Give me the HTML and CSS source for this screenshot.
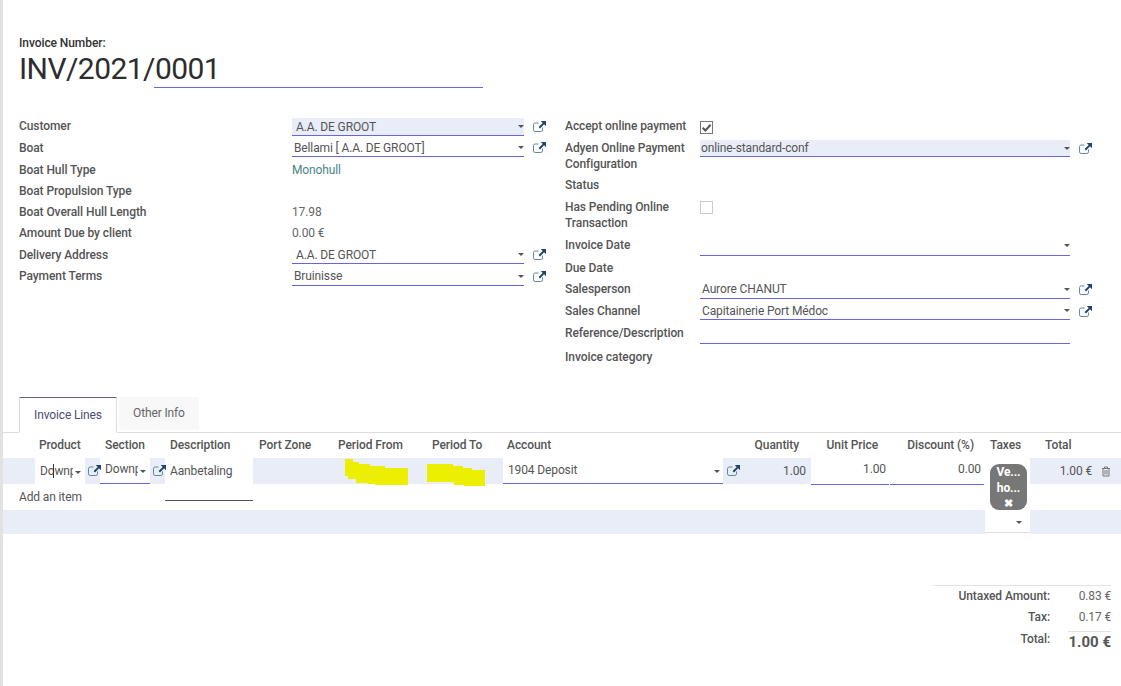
FILE: index.html
```html
<!DOCTYPE html>
<html lang="en">
<head>
<meta charset="utf-8">
<title>Invoice</title>
<link rel="stylesheet" href="styles.css">
</head>
<body>
<svg class="defs" width="0" height="0" aria-hidden="true"><defs>
<symbol id="ext" viewBox="0 0 13 11"><path d="M9.500 6.500v2.300a1.700 1.700 0 0 1-1.700 1.700H2.200A1.700 1.700 0 0 1 .5 8.800V3.700A1.700 1.700 0 0 1 2.200 2h3.300" fill="none" stroke="#5f87a0" stroke-width="1"/><path d="M7.800 0H13V5.200L11.100 3.300 7 7.400 5.600 6 9.700 1.900Z" fill="#1f4470"/></symbol>
</defs></svg>
<main class="sheet">
  <header class="title">
    <div class="title-label">Invoice Number:</div>
    <div class="title-row"><h1>INV/2021/0001</h1><span class="title-line"></span></div>
  </header>

  <section class="groups">
    <div class="group left">
      <div class="row h22"><label>Customer</label><div class="field filled pad nudge f17"><span>A.A. DE GROOT</span><i class="caret"></i></div><svg class="ext"><use href="#ext"/></svg></div>
      <div class="row h22"><label>Boat</label><div class="field f17"><span>Bellami [ A.A. DE GROOT]</span><i class="caret"></i></div><svg class="ext up"><use href="#ext"/></svg></div>
      <div class="row h21"><label>Boat Hull Type</label><div class="value teal">Monohull</div></div>
      <div class="row h21"><label>Boat Propulsion Type</label></div>
      <div class="row h21"><label>Boat Overall Hull Length</label><div class="value">17.98</div></div>
      <div class="row h22"><label>Amount Due by client</label><div class="value">0.00 €</div></div>
      <div class="row h21"><label>Delivery Address</label><div class="field pad f17"><span>A.A. DE GROOT</span><i class="caret"></i></div><svg class="ext up"><use href="#ext"/></svg></div>
      <div class="row h21"><label>Payment Terms</label><div class="field nudge lift f17"><span>Bruinisse</span><i class="caret"></i></div><svg class="ext"><use href="#ext"/></svg></div>
    </div>
    <div class="group right">
      <div class="row h22"><label>Accept online payment</label><span class="check on"><svg viewBox="0 0 10 10"><path d="M1.500 5.200 4 7.700 8.700 2.500" fill="none" stroke="currentColor" stroke-width="1.800"/></svg></span></div>
      <div class="row h37"><label>Adyen Online Payment Configuration</label><div class="field filled nudge f16"><span>online-standard-conf</span><i class="caret"></i></div><svg class="ext"><use href="#ext"/></svg></div>
      <div class="row h22"><label>Status</label></div>
      <div class="row h38"><label>Has Pending Online Transaction</label><span class="check"></span></div>
      <div class="row h23"><label>Invoice Date</label><div class="field f19"><span></span><i class="caret"></i></div></div>
      <div class="row h21"><label>Due Date</label></div>
      <div class="row h22"><label>Salesperson</label><div class="field f18"><span>Aurore CHANUT</span><i class="caret"></i></div><svg class="ext"><use href="#ext"/></svg></div>
      <div class="row h22"><label>Sales Channel</label><div class="field f17"><span>Capitainerie Port Médoc</span><i class="caret"></i></div><svg class="ext"><use href="#ext"/></svg></div>
      <div class="row h24"><label>Reference/Description</label><div class="field f19"><span></span></div></div>
      <div class="row h22"><label>Invoice category</label></div>
    </div>
  </section>

  <nav class="tabs">
    <a class="tab active">Invoice Lines</a>
    <a class="tab">Other Info</a>
  </nav>

  <section class="lines">
    <div class="th c-product">Product</div>
    <div class="th c-section">Section</div>
    <div class="th c-desc">Description</div>
    <div class="th c-port">Port Zone</div>
    <div class="th c-from">Period From</div>
    <div class="th c-to">Period To</div>
    <div class="th c-account">Account</div>
    <div class="th num c-qty">Quantity</div>
    <div class="th num c-price">Unit Price</div>
    <div class="th num c-disc">Discount (%)</div>
    <div class="th c-tax">Taxes</div>
    <div class="th c-total">Total</div>

    <div class="cell tint c-gut"></div>
    <div class="cell input-cell c-product"><span class="clip">Down<span class="cursor"></span>payment</span><i class="caret"></i></div>
    <div class="cell tint icon-cell c-pi"><svg class="ext"><use href="#ext"/></svg></div>
    <div class="cell input-cell under c-section"><span class="clip high">Downpayment</span><i class="caret"></i></div>
    <div class="cell tint icon-cell c-si"><svg class="ext"><use href="#ext"/></svg></div>
    <div class="cell desc-cell"><span class="desc-text">Aanbetaling</span></div>
    <div class="cell tint c-port"></div>
    <div class="cell tint c-from"><svg class="mark mark-from" viewBox="0 0 63 26"><path d="M0 0H8V3H14V5H25V7H40V9H63V26H30V25H22V24H11V20H3V17H0Z" fill="#ecf000"/></svg></div>
    <div class="cell tint c-to"><svg class="mark mark-to" viewBox="0 0 58 22"><path d="M0 0H26V2H36V4H45V6H58V22H37V21H27V18H0Z" fill="#ecf000"/></svg></div>
    <div class="cell input-cell under account c-account"><span class="clip">1904 Deposit</span><i class="caret"></i></div>
    <div class="cell tint icon-cell c-ai"><svg class="ext"><use href="#ext"/></svg></div>
    <div class="cell tint numval c-qty">1.00</div>
    <div class="cell under numval white c-price">1.00</div>
    <div class="cell under numval white c-disc">0.00</div>
    <div class="cell tax-cell">
      <div class="tag"><span>Ve...</span><span>ho...</span><span class="x">✖</span></div>
      <i class="caret"></i>
    </div>
    <div class="cell tint total-cell c-total"><span>1.00 €</span><svg class="trash" viewBox="0 0 10 11"><path d="M1 2.500H9M3.500 2.500V1H6.500V2.500M2 2.500V10H8V2.500M4 4V8.500M6 4V8.500" fill="none" stroke="currentColor"/></svg></div>

    <div class="add">Add an item</div>
    <div class="band band-a"></div>
    <div class="band band-b"></div>
  </section>

  <section class="totals">
    <div class="tot-row"><span class="tot-label">Untaxed Amount:</span><span class="tot-val">0.83 €</span></div>
    <div class="tot-row"><span class="tot-label">Tax:</span><span class="tot-val">0.17 €</span></div>
    <div class="tot-row grand"><span class="tot-label">Total:</span><span class="tot-val">1.00 €</span></div>
  </section>
</main>
</body>
</html>
```
FILE: styles.css
```css
html, body { margin: 0; padding: 0; height: 100%; overflow: hidden; background: #fff; }
body { font-family: Roboto, "Liberation Sans", sans-serif; font-size: 12px; line-height: 16px; color: #4c4c4c; letter-spacing: -0.13px; }
.defs { display: block; height: 0; }
.sheet { height: 686px; border-left: 3px solid #e2e2e2; box-sizing: border-box; }

.title { padding: 35px 0 0 16px; height: 97px; box-sizing: border-box; }
.title-label { font-weight: 500; color: #333; letter-spacing: -0.08px; }
.title-row { display: flex; height: 37px; align-items: flex-start; }
h1 { margin: 0; font-size: 30px; line-height: 36px; font-weight: 400; color: #2d2d2d; width: 135px; white-space: nowrap; letter-spacing: -0.55px; }
.title-line { display: block; width: 329px; height: 36px; border-bottom: 1px solid #6666e0; }

.groups { display: flex; padding: 20px 0 0 16px; height: 300px; box-sizing: border-box; }
.group { display: flex; flex-direction: column; }
.left { width: 546px; }
.row { display: flex; align-items: flex-start; flex: none; }
.row label { font-weight: 500; color: #555; flex: none; padding-top: 1px; letter-spacing: -0.08px; }
.left label { width: 273px; }
.right label { width: 135px; }
.h21 { height: 21px; }
.h22 { height: 22px; }
.h23 { height: 23px; }
.h24 { height: 24px; }
.h37 { height: 37px; }
.h38 { height: 38px; }
.field { display: flex; align-items: center; border-bottom: 1px solid #6666e0; flex: none; }
.f16 { height: 16px; }
.f17 { height: 17px; }
.f18 { height: 18px; }
.f19 { height: 19px; }
.nudge { margin-top: 1px; }
.lift span { margin-top: -2px; }
.left .field { width: 232px; }
.right .field { width: 370px; }
.field span { flex: 1; padding: 0 2px; white-space: nowrap; color: #555; }
.field.pad span { padding-left: 4px; }
.filled { background: #e9edf8; }
.right .filled span { padding-left: 1px; }
.value { padding-top: 1px; color: #666; }
.teal { color: #4a8585; }
.caret { flex: none; width: 0; height: 0; border-top: 3.500px solid #555; border-left: 3.500px solid transparent; border-right: 3.500px solid transparent; }
.ext { width: 13px; height: 11px; flex: none; margin: 4px 0 0 9px; display: block; }
.ext.up { margin-top: 3px; }
.check { width: 11px; height: 11px; border: 1px solid #ccc; margin-top: 3px; color: #555; display: block; flex: none; }
.check.on { border-color: #777; margin-top: 4px; }
.check svg { display: block; width: 11px; height: 11px; }

.tabs { display: flex; gap: 2px; padding-left: 16px; height: 36px; box-sizing: border-box; }
.tab { display: block; box-sizing: border-box; height: 33px; line-height: 33px; padding: 0 14px; background: #f8f8f8; color: #666; white-space: nowrap; width: 80px; }
.tab.active { height: 36px; background: #fff; border: 1px solid #ddd; border-top-color: #7b5f7a; border-bottom-color: #fff; color: #4c4c73; line-height: 35px; width: 98px; }
.lines { display: grid; border-top: 1px solid #ddd; margin-top: -1px;
  grid-template-columns: 32px 50px 15px 50px 15px 88px 81px 94px 75px 220px 19px 69px 78px 96px 45px 91px;
  grid-template-rows: 25px 26px 26px 24px; }
.th { font-weight: 500; color: #555; line-height: 25px; grid-row: 1; white-space: nowrap; letter-spacing: -0.08px; }
.th.num { text-align: right; }
.th.c-product { grid-column: 1 / 3; padding-left: 36px; }
.th.c-section { grid-column: 4 / 6; padding-left: 5px; }
.th.c-desc { grid-column: 6; padding-left: 5px; }
.th.c-port { grid-column: 7; padding-left: 6px; }
.th.c-from { grid-column: 8; padding-left: 4px; }
.th.c-to { grid-column: 9; padding-left: 4px; }
.th.c-account { grid-column: 10; padding-left: 4px; }
.th.c-qty { grid-column: 11 / 13; padding-right: 12px; }
.th.c-price { grid-column: 13; padding-right: 11px; }
.th.c-disc { grid-column: 14; padding-right: 11px; }
.th.c-tax { grid-column: 15; padding-left: 5px; }
.th.c-total { grid-column: 16; padding-left: 15px; }

.cell { grid-row: 2; min-width: 0; box-sizing: border-box; display: flex; align-items: center; color: #555; }
.tint { background: #e9edf8; }
.c-gut { grid-column: 1; }
.cell.c-product { grid-column: 2; }
.cell.c-pi { grid-column: 3; }
.cell.c-section { grid-column: 4; }
.cell.c-si { grid-column: 5; }
.cell.c-port { grid-column: 7; }
.cell.c-from { grid-column: 8; }
.cell.c-to { grid-column: 9; }
.cell.c-account { grid-column: 10; }
.cell.c-ai { grid-column: 11; }
.cell.c-qty { grid-column: 12; }
.cell.c-price { grid-column: 13; }
.cell.c-disc { grid-column: 14; }
.cell.c-total { grid-column: 16; }
.input-cell { padding-left: 5px; background: #fff; }
.input-cell .clip { flex: 1; min-width: 0; overflow: hidden; white-space: nowrap; position: relative; }
.input-cell .caret { margin: 2px 4px 0 2px; }
.high { margin-top: -3px; margin-right: 2px; }
.c-section .caret { margin-left: 0; }
.cursor { display: block; width: 1px; height: 14px; background: #333; position: absolute; left: 13px; top: 1px; }
.under { border-bottom: 1px solid #6666e0; background: #fff; }
.account { padding: 0 0 2px 5px; }
.account .caret { margin: 4px 3px 0 0; }
.icon-cell .ext { margin: 0 0 0 3px; position: relative; top: -1px; }
.c-ai.icon-cell .ext { margin-left: 4px; }
.desc-cell { grid-column: 6; grid-row: 2 / 4; background: #fff; display: block; padding: 5px 0 0 5px; height: 43px; border-bottom: 1px solid #555; }
.desc-text { display: block; }
.numval { justify-content: flex-end; padding-right: 5px; }
.c-price.under { height: 27px; padding: 0 3px 5px 0; }
.c-disc.under { height: 27px; padding: 0 3px 5px 0; margin: 0 1px; }
.tax-cell { grid-column: 15; grid-row: 2 / 5; background: #fff; display: block; padding: 6px 3px 0 5px; position: relative; border-bottom: 1px solid #ddd; height: 75px; }
.tag { width: 37px; height: 46px; border-radius: 9px; background: #777; color: #fff; font-weight: 700; line-height: 16px; display: flex; flex-direction: column; align-items: center; }
.tag span { display: block; }
.tag .x { font-size: 11px; }
.tax-cell .caret { position: absolute; right: 8px; top: 63px; }
.total-cell { justify-content: flex-end; padding-right: 10px; }
.trash { width: 10px; height: 11px; margin-left: 9px; color: #777; }
.mark { display: block; overflow: visible; position: relative; }
.mark-from { width: 63px; height: 26px; margin-left: 11px; top: 1px; }
.mark-to { width: 58px; height: 22px; margin-left: -1px; top: 4px; }
.add { grid-column: 1 / 6; grid-row: 3; padding-left: 16px; line-height: 26px; color: #555; }
.band { grid-row: 4; background: #e9edf8; }
.band-a { grid-column: 1 / 15; }
.band-b { grid-column: 16; }

.totals { margin: 51px 10px 0 auto; width: 178px; border-top: 1px solid #e2e2e2; }
.tot-row { display: flex; justify-content: flex-end; height: 22px; line-height: 20px; }
.tot-row:first-child { height: 21px; }
.tot-label { font-weight: 500; width: 117px; text-align: right; color: #555; letter-spacing: -0.08px; }
.tot-val { width: 61px; text-align: right; color: #666; }
.grand { height: 24px; }
.grand .tot-val { width: 43px; margin: 2px 0 0 18px; border-top: 1px solid #e2e2e2; font-size: 15px; font-weight: 700; color: #555; line-height: 20px; letter-spacing: 0; }
```
